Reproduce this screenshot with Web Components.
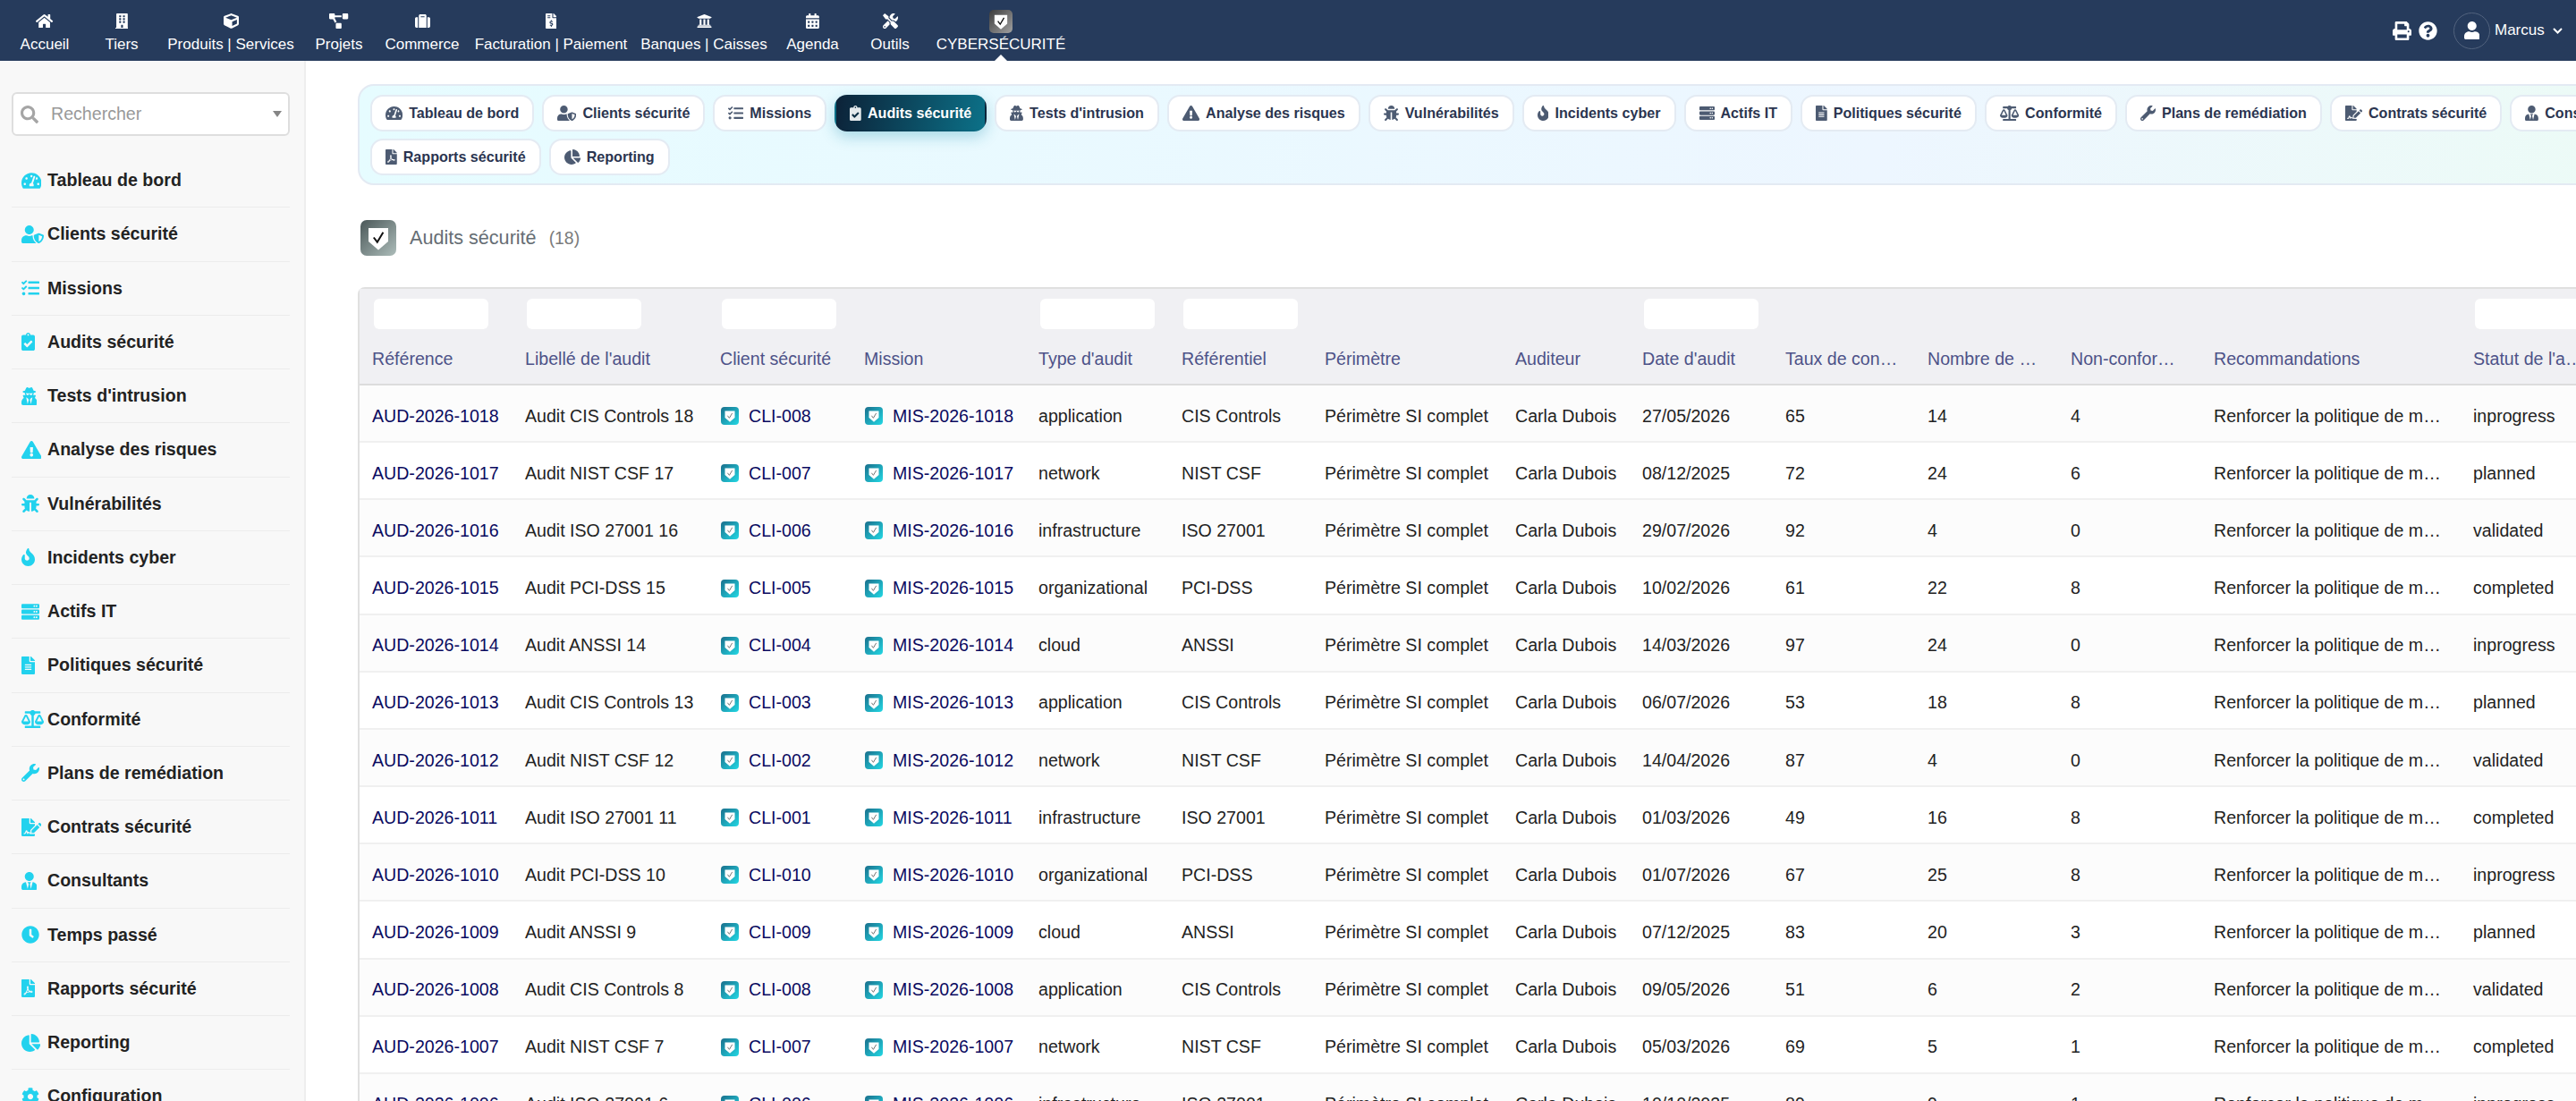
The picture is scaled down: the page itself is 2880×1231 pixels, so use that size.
<!DOCTYPE html>
<html lang="fr">
<head>
<meta charset="utf-8">
<title>Audits sécurité</title>
<style>
  html, body { margin: 0; height: 100%; overflow: hidden; background: #fff; }
  body { font-family: "Liberation Sans", Arial, sans-serif; }
</style>
</head>
<body>
<app-shell>
  <top-bar slot="top">
    <nav-item icon="home" w="86">Accueil</nav-item>
    <nav-item icon="building" w="86">Tiers</nav-item>
    <nav-item icon="cube" w="158">Produits | Services</nav-item>
    <nav-item icon="diagram" w="84">Projets</nav-item>
    <nav-item icon="suitcase" w="102">Commerce</nav-item>
    <nav-item icon="invoice" w="186">Facturation | Paiement</nav-item>
    <nav-item icon="landmark" w="156">Banques | Caisses</nav-item>
    <nav-item icon="calendar" w="87">Agenda</nav-item>
    <nav-item icon="tools" w="86">Outils</nav-item>
    <nav-item badge w="162" active>CYBERSÉCURITÉ</nav-item>
  </top-bar>
  <side-menu slot="side">
    <side-item icon="gauge">Tableau de bord</side-item>
    <side-item icon="usershield">Clients sécurité</side-item>
    <side-item icon="tasks">Missions</side-item>
    <side-item icon="clipboard">Audits sécurité</side-item>
    <side-item icon="spy">Tests d'intrusion</side-item>
    <side-item icon="warning">Analyse des risques</side-item>
    <side-item icon="bug">Vulnérabilités</side-item>
    <side-item icon="fire">Incidents cyber</side-item>
    <side-item icon="server">Actifs IT</side-item>
    <side-item icon="file">Politiques sécurité</side-item>
    <side-item icon="scale">Conformité</side-item>
    <side-item icon="wrench">Plans de remédiation</side-item>
    <side-item icon="signature">Contrats sécurité</side-item>
    <side-item icon="usertie">Consultants</side-item>
    <side-item icon="clock">Temps passé</side-item>
    <side-item icon="pdf">Rapports sécurité</side-item>
    <side-item icon="pie">Reporting</side-item>
    <side-item icon="cog">Configuration</side-item>
  </side-menu>
  <tab-panel>
    <tab-chip icon="gauge">Tableau de bord</tab-chip>
    <tab-chip icon="usershield">Clients sécurité</tab-chip>
    <tab-chip icon="tasks">Missions</tab-chip>
    <tab-chip icon="clipboard" active>Audits sécurité</tab-chip>
    <tab-chip icon="spy">Tests d'intrusion</tab-chip>
    <tab-chip icon="warning">Analyse des risques</tab-chip>
    <tab-chip icon="bug">Vulnérabilités</tab-chip>
    <tab-chip icon="fire">Incidents cyber</tab-chip>
    <tab-chip icon="server">Actifs IT</tab-chip>
    <tab-chip icon="file">Politiques sécurité</tab-chip>
    <tab-chip icon="scale">Conformité</tab-chip>
    <tab-chip icon="wrench">Plans de remédiation</tab-chip>
    <tab-chip icon="signature">Contrats sécurité</tab-chip>
    <tab-chip icon="usertie">Consultants</tab-chip>
    <tab-chip icon="clock">Temps passé</tab-chip>
    <tab-chip icon="pdf">Rapports sécurité</tab-chip>
    <tab-chip icon="pie">Reporting</tab-chip>
  </tab-panel>
  <page-title count="(18)">Audits sécurité</page-title>
  <audit-table></audit-table>
</app-shell>

<script>
const ICONS = {
  home: [576, "M280.37 148.26L96 300.11V464a16 16 0 0 0 16 16l112.06-.29a16 16 0 0 0 15.92-16V368a16 16 0 0 1 16-16h64a16 16 0 0 1 16 16v95.64a16 16 0 0 0 16 16.05L464 480a16 16 0 0 0 16-16V300L295.67 148.26a12.19 12.19 0 0 0-15.3 0zM571.6 251.47L488 182.56V44.05a12 12 0 0 0-12-12h-56a12 12 0 0 0-12 12v72.61L318.47 43a48 48 0 0 0-61 0L4.34 251.47a12 12 0 0 0-1.6 16.9l25.5 31A12 12 0 0 0 45.15 301l235.22-193.74a12.19 12.19 0 0 1 15.3 0L530.9 301a12 12 0 0 0 16.9-1.6l25.5-31a12 12 0 0 0-1.7-16.93z"],
  building: [448, "M436 480h-20V24c0-13.255-10.745-24-24-24H56C42.745 0 32 10.745 32 24v456H12c-6.627 0-12 5.373-12 12v20h448v-20c0-6.627-5.373-12-12-12zM128 76c0-6.627 5.373-12 12-12h40c6.627 0 12 5.373 12 12v40c0 6.627-5.373 12-12 12h-40c-6.627 0-12-5.373-12-12V76zm0 96c0-6.627 5.373-12 12-12h40c6.627 0 12 5.373 12 12v40c0 6.627-5.373 12-12 12h-40c-6.627 0-12-5.373-12-12v-40zm52 148h-40c-6.627 0-12-5.373-12-12v-40c0-6.627 5.373-12 12-12h40c6.627 0 12 5.373 12 12v40c0 6.627-5.373 12-12 12zm76 160h-64v-84c0-6.627 5.373-12 12-12h40c6.627 0 12 5.373 12 12v84zm64-172c0 6.627-5.373 12-12 12h-40c-6.627 0-12-5.373-12-12v-40c0-6.627 5.373-12 12-12h40c6.627 0 12 5.373 12 12v40zm0-96c0 6.627-5.373 12-12 12h-40c-6.627 0-12-5.373-12-12v-40c0-6.627 5.373-12 12-12h40c6.627 0 12 5.373 12 12v40zm0-96c0 6.627-5.373 12-12 12h-40c-6.627 0-12-5.373-12-12V76c0-6.627 5.373-12 12-12h40c6.627 0 12 5.373 12 12v40z"],
  cube: [512, "M239.1 6.3l-208 78c-18.7 7-31.1 25-31.1 45v225.1c0 18.2 10.3 34.8 26.5 42.9l208 104c13.5 6.8 29.4 6.8 42.9 0l208-104c16.3-8.1 26.5-24.8 26.5-42.9V129.3c0-20-12.4-37.9-31.1-44.9l-208-78C262 2.2 250 2.2 239.1 6.3zM256 68.4l192 72v1.1l-192 78-192-78v-1.1l192-72zm32 356V275.5l160-65v133.9l-160 80z"],
  diagram: [640, "M384 320H256c-17.67 0-32 14.33-32 32v128c0 17.67 14.33 32 32 32h128c17.67 0 32-14.33 32-32V352c0-17.67-14.33-32-32-32zM192 32c0-17.67-14.33-32-32-32H32C14.33 0 0 14.33 0 32v128c0 17.67 14.33 32 32 32h95.72l73.16 128.04C211.98 300.98 232.4 288 256 288h.28L192 175.51V128h224V64H192V32zM608 0H480c-17.67 0-32 14.33-32 32v128c0 17.67 14.33 32 32 32h128c17.67 0 32-14.33 32-32V32c0-17.67-14.33-32-32-32z"],
  suitcase: [512, "M128 480h256V80c0-26.5-21.5-48-48-48H176c-26.5 0-48 21.5-48 48v400zm64-384h128v32H192V96zm320 80v256c0 26.5-21.5 48-48 48h-48V128h48c26.5 0 48 21.5 48 48zM96 480H48c-26.5 0-48-21.5-48-48V176c0-26.5 21.5-48 48-48h48v352z"],
  invoice: [384, "M377 105L279.1 7c-4.5-4.5-10.6-7-17-7H256v128h128v-6.1c0-6.3-2.5-12.4-7-16.9zm-153 31V0H24C10.7 0 0 10.7 0 24v464c0 13.3 10.7 24 24 24h336c13.3 0 24-10.7 24-24V160H248c-13.2 0-24-10.8-24-24zM64 72c0-4.42 3.58-8 8-8h80c4.42 0 8 3.58 8 8v16c0 4.42-3.58 8-8 8H72c-4.42 0-8-3.58-8-8V72zm0 80v-16c0-4.42 3.58-8 8-8h80c4.42 0 8 3.58 8 8v16c0 4.42-3.58 8-8 8H72c-4.42 0-8-3.58-8-8zm144 263.88V440c0 4.42-3.58 8-8 8h-16c-4.42 0-8-3.58-8-8v-24.29c-11.29-.58-22.27-4.52-31.37-11.35-3.9-2.93-4.1-8.77-.57-12.14l11.75-11.21c2.77-2.64 6.89-2.76 10.13-.73 3.87 2.42 8.26 3.72 12.82 3.72h28.11c6.5 0 11.8-5.92 11.8-13.19 0-5.95-3.61-11.19-8.77-12.73l-45-13.5c-18.59-5.58-31.58-23.42-31.58-43.39 0-24.52 19.05-44.44 42.67-45.07V232c0-4.42 3.58-8 8-8h16c4.42 0 8 3.58 8 8v24.29c11.29.58 22.27 4.51 31.37 11.35 3.9 2.93 4.1 8.77.57 12.14l-11.75 11.21c-2.77 2.64-6.89 2.76-10.13.73-3.87-2.43-8.26-3.72-12.82-3.72h-28.11c-6.5 0-11.8 5.92-11.8 13.19 0 5.95 3.61 11.19 8.77 12.73l45 13.5c18.59 5.58 31.58 23.42 31.58 43.39 0 24.53-19.05 44.44-42.67 45.07z"],
  landmark: [512, "M496 128v16a8 8 0 0 1-8 8h-24v12c0 6.627-5.373 12-12 12H60c-6.627 0-12-5.373-12-12v-12H24a8 8 0 0 1-8-8v-16a8 8 0 0 1 4.941-7.392l232-88a7.996 7.996 0 0 1 6.118 0l232 88A8 8 0 0 1 496 128zm-24 304H40c-13.255 0-24 10.745-24 24v16a8 8 0 0 0 8 8h464a8 8 0 0 0 8-8v-16c0-13.255-10.745-24-24-24zM96 192v192H60c-6.627 0-12 5.373-12 12v20h416v-20c0-6.627-5.373-12-12-12h-36V192h-64v192h-64V192h-64v192h-64V192H96z"],
  calendar: [448, "M0 464c0 26.5 21.5 48 48 48h352c26.5 0 48-21.5 48-48V192H0v272zm320-196c0-6.6 5.4-12 12-12h40c6.6 0 12 5.4 12 12v40c0 6.6-5.4 12-12 12h-40c-6.6 0-12-5.4-12-12v-40zm0 128c0-6.6 5.4-12 12-12h40c6.6 0 12 5.4 12 12v40c0 6.6-5.4 12-12 12h-40c-6.6 0-12-5.4-12-12v-40zM192 268c0-6.6 5.4-12 12-12h40c6.6 0 12 5.4 12 12v40c0 6.6-5.4 12-12 12h-40c-6.6 0-12-5.4-12-12v-40zm0 128c0-6.6 5.4-12 12-12h40c6.6 0 12 5.4 12 12v40c0 6.6-5.4 12-12 12h-40c-6.6 0-12-5.4-12-12v-40zM64 268c0-6.6 5.4-12 12-12h40c6.6 0 12 5.4 12 12v40c0 6.6-5.4 12-12 12H76c-6.6 0-12-5.4-12-12v-40zm0 128c0-6.6 5.4-12 12-12h40c6.6 0 12 5.4 12 12v40c0 6.6-5.4 12-12 12H76c-6.6 0-12-5.4-12-12v-40zM400 64h-48V16c0-8.8-7.2-16-16-16h-32c-8.8 0-16 7.2-16 16v48H160V16c0-8.8-7.2-16-16-16h-32c-8.8 0-16 7.2-16 16v48H48C21.5 64 0 85.5 0 112v48h448v-48c0-26.5-21.5-48-48-48z"],
  tools: [512, "M501.1 395.7L384 278.6c-23.1-23.1-57.6-27.6-85.4-13.9L192 158.1V96L64 0 0 64l96 128h62.1l106.6 106.6c-13.6 27.8-9.2 62.3 13.9 85.4l117.1 117.1c14.6 14.6 38.2 14.6 52.7 0l52.7-52.7c14.5-14.6 14.5-38.2 0-52.7zM331.7 225c28.3 0 54.9 11 74.9 31l19.4 19.4c15.8-6.9 30.8-16.5 43.8-29.5 37.1-37.1 49.7-89.3 37.9-136.7-2.2-9-13.5-12.1-20.1-5.5l-74.4 74.4-67.9-11.3L334 98.9l74.4-74.4c6.6-6.6 3.4-17.9-5.7-20.2-47.4-11.7-99.6.9-136.6 37.9-28.5 28.5-41.9 66.1-41.2 103.6l82.1 82.1c8.1-1.9 16.5-2.9 24.7-2.9zm-103.9 82l-56.7-56.7L18.7 402.8c-25 25-25 65.5 0 90.5s65.5 25 90.5 0l123.6-123.6c-7.6-19.9-9.9-41.6-5-62.7zM64 472c-13.2 0-24-10.8-24-24 0-13.3 10.7-24 24-24s24 10.7 24 24c0 13.2-10.7 24-24 24z"],
  print: [512, "M448 192V77.25c0-8.49-3.37-16.62-9.37-22.63L393.37 9.37c-6-6-14.14-9.37-22.63-9.37H96C78.33 0 64 14.33 64 32v160c-35.35 0-64 28.65-64 64v112c0 8.84 7.16 16 16 16h48v96c0 17.67 14.33 32 32 32h320c17.67 0 32-14.33 32-32v-96h48c8.84 0 16-7.16 16-16V256c0-35.35-28.65-64-64-64zm-64 256H128v-96h256v96zm0-224H128V64h192v48c0 8.84 7.16 16 16 16h48v96zm48 72c-13.25 0-24-10.75-24-24 0-13.26 10.75-24 24-24s24 10.74 24 24c0 13.25-10.75 24-24 24z"],
  help: [512, "M504 256c0 136.997-111.043 248-248 248S8 392.997 8 256C8 119.083 119.043 8 256 8s248 111.083 248 248zM262.655 90c-54.497 0-89.255 22.957-116.549 63.758-3.536 5.286-2.353 12.415 2.715 16.258l34.699 26.31c5.205 3.947 12.621 3.008 16.665-2.122 17.864-22.658 30.113-35.797 57.303-35.797 20.429 0 45.698 13.148 45.698 32.958 0 14.976-12.363 22.667-32.534 33.976C247.128 238.528 216 254.941 216 296v4c0 6.627 5.373 12 12 12h56c6.627 0 12-5.373 12-12v-1.333c0-28.462 83.186-29.647 83.186-106.667 0-58.002-60.165-102-116.531-102zM256 338c-25.365 0-46 20.635-46 46 0 25.364 20.635 46 46 46s46-20.636 46-46c0-25.365-20.635-46-46-46z"],
  user: [448, "M224 256c70.7 0 128-57.3 128-128S294.7 0 224 0 96 57.3 96 128s57.3 128 128 128zm89.6 32h-16.7c-22.2 10.2-46.9 16-72.9 16s-50.6-5.8-72.9-16h-16.7C60.2 288 0 348.2 0 422.4V464c0 26.5 21.5 48 48 48h352c26.5 0 48-21.5 48-48v-41.6c0-74.2-60.2-134.4-134.4-134.4z"],
  gauge: [576, "M288 32C128.94 32 0 160.94 0 320c0 52.8 14.25 102.26 39.06 144.8 5.61 9.62 16.3 15.2 27.44 15.2h443c11.14 0 21.83-5.58 27.44-15.2C561.75 422.26 576 372.8 576 320c0-159.06-128.94-288-288-288zm0 64c14.71 0 26.58 10.13 30.32 23.65-1.11 2.26-2.64 4.23-3.45 6.67l-9.22 27.67c-5.13 3.49-10.97 6.01-17.64 6.01-17.67 0-32-14.33-32-32S270.33 96 288 96zM96 384c-17.67 0-32-14.33-32-32s14.33-32 32-32 32 14.33 32 32-14.33 32-32 32zm48-160c-17.67 0-32-14.33-32-32s14.33-32 32-32 32 14.33 32 32-14.33 32-32 32zm246.77-72.41l-61.33 184C343.13 347.33 352 364.54 352 384c0 11.72-3.38 22.55-8.88 32H232.88c-5.5-9.45-8.88-20.28-8.88-32 0-33.94 26.5-61.43 59.9-63.59l61.34-184.01c4.17-12.56 17.73-19.45 30.36-15.17 12.57 4.19 19.35 17.79 15.17 30.36zm14.66 57.2l15.52-46.55c3.47-1.29 7.13-2.23 11.05-2.23 17.67 0 32 14.33 32 32s-14.33 32-32 32c-11.38-.01-20.89-6.28-26.57-15.22zM480 384c-17.67 0-32-14.33-32-32s14.33-32 32-32 32 14.33 32 32-14.33 32-32 32z"],
  usershield: [640, "M622.3 271.1l-115.2-45c-4.1-1.6-12.6-3.7-22.2 0l-115.2 45c-10.7 4.2-17.7 14-17.7 24.9 0 111.6 68.7 188.8 132.9 213.9 9.6 3.7 18 1.6 22.2 0C558.4 489.9 640 420.5 640 296c0-10.9-7-20.7-17.7-24.9zM496 462.4V273.3l95.5 37.3c-5.6 87.1-60.9 135.4-95.5 151.8zM224 256c70.7 0 128-57.3 128-128S294.7 0 224 0 96 57.3 96 128s57.3 128 128 128zm96 40c0-2.5.8-4.8 1.1-7.2-2.5-.1-4.9-.8-7.5-.8h-16.7c-22.2 10.2-46.9 16-72.9 16s-50.6-5.8-72.9-16h-16.7C60.2 288 0 348.2 0 422.4V464c0 26.5 21.5 48 48 48h352c6.8 0 13.3-1.5 19.2-4-54-42.9-99.2-116.7-99.2-212z"],
  tasks: [512, "M139.61 35.5a12 12 0 0 0-17 0L58.93 98.81l-22.7-22.12a12 12 0 0 0-17 0L3.53 92.41a12 12 0 0 0 0 17l47.59 47.4a12.78 12.78 0 0 0 17.61 0l15.59-15.62L156.52 69a12.09 12.09 0 0 0 .09-17zm0 159.19a12 12 0 0 0-17 0l-63.68 63.72-22.7-22.1a12 12 0 0 0-17 0L3.53 252a12 12 0 0 0 0 17L51 316.5a12.77 12.77 0 0 0 17.6 0l15.7-15.69 72.2-72.22a12 12 0 0 0 .09-16.9zM64 368c-26.49 0-48.59 21.5-48.59 48S37.53 464 64 464a48 48 0 0 0 0-96zm432 16H208a16 16 0 0 0-16 16v32a16 16 0 0 0 16 16h288a16 16 0 0 0 16-16v-32a16 16 0 0 0-16-16zm0-320H208a16 16 0 0 0-16 16v32a16 16 0 0 0 16 16h288a16 16 0 0 0 16-16V80a16 16 0 0 0-16-16zm0 160H208a16 16 0 0 0-16 16v32a16 16 0 0 0 16 16h288a16 16 0 0 0 16-16v-32a16 16 0 0 0-16-16z"],
  clipboard: [384, "M336 64h-80c0-35.3-28.7-64-64-64s-64 28.7-64 64H48C21.5 64 0 85.5 0 112v352c0 26.5 21.5 48 48 48h288c26.5 0 48-21.5 48-48V112c0-26.5-21.5-48-48-48zM192 40c13.3 0 24 10.7 24 24s-10.7 24-24 24-24-10.7-24-24 10.7-24 24-24zm121.2 231.8l-143 141.8c-4.7 4.7-12.3 4.6-17-.1l-82.6-83.3c-4.7-4.7-4.6-12.3.1-17L99.1 285c4.7-4.7 12.3-4.6 17 .1l46 46.4 106-105.2c4.7-4.7 12.3-4.6 17 .1l28.2 28.4c4.7 4.8 4.6 12.3-.1 17z"],
  spy: [448, "M383.9 308.3l23.9-62.6c4-10.5-3.7-21.7-15-21.7h-58.5c11-18.9 17.8-40.6 17.8-64v-.3c39.2-7.8 64-19.1 64-31.7 0-13.3-27.3-25.1-70.1-33-9.2-32.8-27-65.8-40.6-82.8-9.5-11.9-25.9-15.6-39.5-8.8l-27.6 13.8c-9 4.5-19.6 4.5-28.6 0L182.1 3.4c-13.6-6.8-30-3.1-39.5 8.8-13.5 17-31.4 50-40.6 82.8-42.7 7.9-70 19.7-70 33 0 12.6 24.8 23.9 64 31.7v.3c0 23.4 6.8 45.1 17.8 64H56.3c-11.5 0-19.2 11.7-14.7 22.3l25.8 60.2C27.3 329.8 0 372.7 0 422.4v44.8C0 491.9 20.1 512 44.8 512h358.4c24.7 0 44.8-20.1 44.8-44.8v-44.8c0-48.4-25.8-90.4-64.1-114.1zM176 480l-41.6-192 49.6 32 24 40-32 120zm96 0l-32-120 24-40 49.6-32L272 480zm41.7-298.5c-3.9 11.9-7 24.6-16.5 33.4-10.1 9.3-48 22.4-64-25-2.8-8.4-15.4-8.4-18.3 0-17 50.2-56 32.4-64 25-9.5-8.8-12.7-21.5-16.5-33.4-.8-2.5-6.3-5.7-6.3-5.8v-10.8c28.3 3.6 61 5.8 96 5.8s67.7-2.1 96-5.8v10.8c-.1.1-5.6 3.2-6.4 5.8z"],
  warning: [576, "M569.517 440.013C587.975 472.007 564.806 512 527.94 512H48.054c-36.937 0-59.999-40.055-41.577-71.987L246.423 23.985c18.467-32.009 64.72-31.951 83.154 0l239.94 416.028zM288 354c-25.405 0-46 20.595-46 46s20.595 46 46 46 46-20.595 46-46-20.595-46-46-46zm-43.673-165.346l7.418 136c.347 6.364 5.609 11.346 11.982 11.346h48.546c6.373 0 11.635-4.982 11.982-11.346l7.418-136c.375-6.874-5.098-12.654-11.982-12.654h-63.383c-6.884 0-12.356 5.78-11.981 12.654z"],
  bug: [512, "M511.988 288.9c-.478 17.43-15.217 31.1-32.653 31.1H424v16c0 21.864-4.882 42.584-13.6 61.145l60.228 60.228c12.496 12.497 12.496 32.758 0 45.255-12.498 12.497-32.759 12.496-45.256 0l-54.736-54.736C345.886 467.965 314.351 480 280 480V236c0-6.627-5.373-12-12-12h-24c-6.627 0-12 5.373-12 12v244c-34.351 0-65.886-12.035-90.636-32.108l-54.736 54.736c-12.498 12.497-32.759 12.496-45.256 0-12.496-12.497-12.496-32.758 0-45.255l60.228-60.228C92.882 378.584 88 357.864 88 336v-16H32.666C15.23 320 .491 306.33.013 288.9-.484 270.816 14.028 256 32 256h56v-58.745l-46.628-46.628c-12.496-12.497-12.496-32.758 0-45.255 12.498-12.497 32.758-12.497 45.256 0L141.255 160h229.489l54.627-54.627c12.498-12.497 32.758-12.497 45.256 0 12.496 12.497 12.496 32.758 0 45.255L424 197.255V256h56c17.972 0 32.484 14.816 31.988 32.9zM257 0c-61.856 0-112 50.144-112 112h224C369 50.144 318.856 0 257 0z"],
  fire: [384, "M216 23.86c0-23.8-30.65-32.77-44.15-13.04C48 191.85 224 200 224 288c0 35.63-29.11 64.46-64.85 63.99-35.17-.45-63.15-29.77-63.15-64.94v-85.51c0-21.7-26.47-32.23-41.43-16.5C27.8 213.16 0 261.33 0 320c0 105.87 86.13 192 192 192s192-86.13 192-192c0-170.29-168-193-168-296.14z"],
  server: [512, "M480 160H32c-17.673 0-32-14.327-32-32V64c0-17.673 14.327-32 32-32h448c17.673 0 32 14.327 32 32v64c0 17.673-14.327 32-32 32zm-48-88c-13.255 0-24 10.745-24 24s10.745 24 24 24 24-10.745 24-24-10.745-24-24-24zm-64 0c-13.255 0-24 10.745-24 24s10.745 24 24 24 24-10.745 24-24-10.745-24-24-24zm112 248H32c-17.673 0-32-14.327-32-32v-64c0-17.673 14.327-32 32-32h448c17.673 0 32 14.327 32 32v64c0 17.673-14.327 32-32 32zm-48-88c-13.255 0-24 10.745-24 24s10.745 24 24 24 24-10.745 24-24-10.745-24-24-24zm-64 0c-13.255 0-24 10.745-24 24s10.745 24 24 24 24-10.745 24-24-10.745-24-24-24zm112 248H32c-17.673 0-32-14.327-32-32v-64c0-17.673 14.327-32 32-32h448c17.673 0 32 14.327 32 32v64c0 17.673-14.327 32-32 32zm-48-88c-13.255 0-24 10.745-24 24s10.745 24 24 24 24-10.745 24-24-10.745-24-24-24zm-64 0c-13.255 0-24 10.745-24 24s10.745 24 24 24 24-10.745 24-24-10.745-24-24-24z"],
  file: [384, "M224 136V0H24C10.7 0 0 10.7 0 24v464c0 13.3 10.7 24 24 24h336c13.3 0 24-10.7 24-24V160H248c-13.2 0-24-10.8-24-24zm64 236c0 6.6-5.4 12-12 12H108c-6.6 0-12-5.4-12-12v-8c0-6.6 5.4-12 12-12h168c6.6 0 12 5.4 12 12v8zm0-64c0 6.6-5.4 12-12 12H108c-6.6 0-12-5.4-12-12v-8c0-6.6 5.4-12 12-12h168c6.6 0 12 5.4 12 12v8zm0-72v8c0 6.6-5.4 12-12 12H108c-6.6 0-12-5.4-12-12v-8c0-6.6 5.4-12 12-12h168c6.6 0 12 5.4 12 12zm96-114.1v6.1H256V0h6.1c6.4 0 12.5 2.5 17 7l97.9 98c4.5 4.5 7 10.6 7 16.9z"],
  scale: [640, "M256 336h-.02c0-16.18 1.34-8.73-85.05-181.51-17.65-35.29-68.19-35.36-85.87 0C-2.06 328.75.02 320.33.02 336H0c0 44.18 57.31 80 128 80s128-35.82 128-80zM128 176l72 144H56l72-144zm511.98 160c0-16.18 1.34-8.73-85.05-181.51-17.65-35.29-68.19-35.36-85.87 0-87.12 174.26-85.04 165.84-85.04 181.51H384c0 44.18 57.31 80 128 80s128-35.82 128-80h-.02zM440 320l72-144 72 144H440zm88 128H352V153.25c23.51-10.29 41.16-31.48 46.39-57.25H528c8.84 0 16-7.16 16-16V48c0-8.84-7.16-16-16-16H383.64C369.04 12.68 346.09 0 320 0s-49.04 12.68-63.64 32H112c-8.84 0-16 7.16-16 16v32c0 8.84 7.16 16 16 16h129.61c5.23 25.76 22.87 46.96 46.39 57.25V448H112c-8.84 0-16 7.16-16 16v32c0 8.84 7.16 16 16 16h416c8.84 0 16-7.16 16-16v-32c0-8.84-7.16-16-16-16z"],
  wrench: [512, "M507.73 109.1c-2.24-9.03-13.54-12.09-20.12-5.51l-74.36 74.36-67.88-11.31-11.31-67.88 74.36-74.36c6.62-6.62 3.43-17.9-5.66-20.16-47.38-11.74-99.55.91-136.58 37.93-39.64 39.64-50.55 97.1-34.05 147.2L18.74 402.76c-24.99 24.99-24.99 65.51 0 90.5 24.99 24.99 65.51 24.99 90.5 0l213.21-213.21c50.12 16.71 107.47 5.68 147.37-34.22 37.07-37.07 49.7-89.32 37.91-136.73zM64 472c-13.25 0-24-10.75-24-24 0-13.26 10.75-24 24-24s24 10.74 24 24c0 13.25-10.75 24-24 24z"],
  signature: [576, "M218.17 424.14c-2.95-5.92-8.09-6.52-10.17-6.52s-7.22.59-10.02 6.19l-7.67 15.34c-6.37 12.78-25.03 11.37-29.48-2.09L144 386.59l-10.61 31.88c-5.89 17.66-22.38 29.53-41 29.53H80c-8.84 0-16-7.16-16-16s7.16-16 16-16h12.39c4.83 0 9.11-3.08 10.64-7.66l18.19-54.64c3.3-9.81 12.44-16.41 22.78-16.41s19.48 6.59 22.77 16.41l13.88 41.64c19.75-16.19 54.06-9.7 66 14.16 1.89 3.78 5.49 5.95 9.36 6.26v-82.12l128-127.09V160H248c-13.2 0-24-10.8-24-24V0H24C10.7 0 0 10.7 0 24v464c0 13.3 10.7 24 24 24h336c13.3 0 24-10.7 24-24v-40l-128-.11c-16.12-.31-30.58-9.28-37.83-23.75zM384 121.9c0-6.3-2.5-12.4-7-16.9L279.1 7c-4.5-4.5-10.6-7-17-7H256v128h128v-6.1zm-96 225.06V416h68.99l161.68-162.78-67.88-67.88L288 346.96zm280.54-179.63l-31.87-31.87c-9.94-9.94-26.07-9.94-36.01 0l-27.25 27.25 67.88 67.88 27.25-27.25c9.95-9.94 9.95-26.07 0-36.01z"],
  usertie: [448, "M224 256c70.7 0 128-57.3 128-128S294.7 0 224 0 96 57.3 96 128s57.3 128 128 128zm95.8 32.6L272 480l-32-136 32-56h-96l32 56-32 136-47.8-191.4C56.9 292 0 350.3 0 422.4V464c0 26.5 21.5 48 48 48h352c26.5 0 48-21.5 48-48v-41.6c0-72.1-56.9-130.4-128.2-133.8z"],
  clock: [512, "M256,8C119,8,8,119,8,256S119,504,256,504,504,393,504,256,393,8,256,8Zm92.49,313h0l-20,25a16,16,0,0,1-22.49,2.5h0l-67-49.72a40,40,0,0,1-15-31.23V112a16,16,0,0,1,16-16h32a16,16,0,0,1,16,16V256l58,42.5A16,16,0,0,1,348.49,321Z"],
  pdf: [384, "M181.9 256.1c-5-16-4.9-46.9-2-46.9 8.4 0 7.6 36.9 2 46.9zm-1.7 47.2c-7.7 20.2-17.3 43.3-28.4 62.7 18.3-7 39-17.2 62.9-21.9-12.7-9.6-24.9-23.4-34.5-40.8zM86.1 428.1c0 .8 13.2-5.4 34.9-40.2-6.7 6.3-29.1 24.5-34.9 40.2zM248 160h136v328c0 13.3-10.7 24-24 24H24c-13.3 0-24-10.7-24-24V24C0 10.7 10.7 0 24 0h200v136c0 13.2 10.8 24 24 24zm-8 171.8c-20-12.2-33.3-29-42.7-53.8 4.5-18.5 11.6-46.6 6.2-64.2-4.7-29.4-42.4-26.5-47.8-6.8-5 18.3-.4 44.1 8.1 77-11.6 27.6-28.7 64.6-40.8 85.8-.1 0-.1.1-.2.1-27.1 13.9-73.6 44.5-54.5 68 5.6 6.9 16 10 21.5 10 17.9 0 35.7-18 61.1-61.8 25.8-8.5 54.1-19.1 79-23.2 21.7 11.8 47.1 19.5 64 19.5 29.2 0 31.2-32 19.7-43.4-13.9-13.6-54.3-9.7-73.6-7.2zM377 105L279 7c-4.5-4.5-10.6-7-17-7h-6v128h128v-6.1c0-6.3-2.5-12.4-7-16.9zm-74.1 255.3c4.1-2.7-2.5-11.9-42.8-9 37.1 15.8 42.8 9 42.8 9z"],
  pie: [544, "M527.79 288H290.5l158.03 158.03c6.04 6.04 15.98 6.53 22.19.68 38.7-36.46 65.32-85.61 73.13-140.86 1.34-9.46-6.51-17.85-16.06-17.85zm-15.83-64.8C503.72 103.74 408.26 8.28 288.8.04 279.68-.59 272 7.1 272 16.24V240h223.77c9.14 0 16.82-7.68 16.19-16.8zM224 288V50.71c0-9.55-8.39-17.4-17.84-16.06C86.99 51.49-4.1 155.6.14 280.37 4.5 408.51 114.83 513.59 243.03 511.98c50.4-.63 96.97-16.87 135.26-44.03 7.9-5.6 8.42-17.23 1.57-24.08L224 288z"],
  cog: [512, "M487.4 315.7l-42.6-24.6c4.3-23.2 4.3-47 0-70.2l42.6-24.6c4.9-2.8 7.1-8.6 5.5-14-11.1-35.6-30-67.8-54.7-94.6-3.8-4.1-10-5.1-14.8-2.3L380.8 110c-17.9-15.4-38.5-27.3-60.8-35.1V25.8c0-5.6-3.9-10.5-9.4-11.7-36.7-8.2-74.3-7.8-109.2 0-5.5 1.2-9.4 6.1-9.4 11.7V75c-22.2 7.9-42.8 19.8-60.8 35.1L88.7 85.5c-4.9-2.8-11-1.9-14.8 2.3-24.7 26.7-43.6 58.9-54.7 94.6-1.7 5.4.6 11.2 5.5 14L67.3 221c-4.3 23.2-4.3 47 0 70.2l-42.6 24.6c-4.9 2.8-7.1 8.6-5.5 14 11.1 35.6 30 67.8 54.7 94.6 3.8 4.1 10 5.1 14.8 2.3l42.6-24.6c17.9 15.4 38.5 27.3 60.8 35.1v49.2c0 5.6 3.9 10.5 9.4 11.7 36.7 8.2 74.3 7.8 109.2 0 5.5-1.2 9.4-6.1 9.4-11.7v-49.2c22.2-7.9 42.8-19.8 60.8-35.1l42.6 24.6c4.9 2.8 11 1.9 14.8-2.3 24.7-26.7 43.6-58.9 54.7-94.6 1.5-5.5-.7-11.3-5.6-14.1zM256 336c-44.1 0-80-35.9-80-80s35.9-80 80-80 80 35.9 80 80-35.9 80-80 80z"],
  search: [512, "M505 442.7L405.3 343c-4.5-4.5-10.6-7-17-7H372c27.6-35.3 44-79.7 44-128C416 93.1 322.9 0 208 0S0 93.1 0 208s93.1 208 208 208c48.3 0 92.7-16.4 128-44v16.3c0 6.4 2.5 12.5 7 17l99.7 99.7c9.4 9.4 24.6 9.4 33.9 0l28.3-28.3c9.4-9.4 9.4-24.6.1-34zM208 336c-70.7 0-128-57.2-128-128 0-70.7 57.2-128 128-128 70.7 0 128 57.2 128 128 0 70.7-57.2 128-128 128z"]
};

// draws one solid icon, height taken from the size attribute
function iconSvg(name, size) {
  const [w, d] = ICONS[name];
  return `<svg width="${(w / 512) * size}" height="${size}" viewBox="0 0 ${w} 512" fill="currentColor" style="display:block;flex:none"><path d="${d}"/></svg>`;
}

// the shield-and-check logo: used in the menu bar, the title and the table links
function shieldBadge(size, radius, bg, check, shield) {
  return `<span style="display:block;flex:none;width:${size}px;height:${size}px;border-radius:${radius}px;background:${bg}">
    <svg width="${size}" height="${size}" viewBox="0 0 40 40" style="display:block">
      <path d="M9 9h22v15L20 33.5 9 24z" fill="${shield}"/>
      <path d="M14.8 19.5l4 5.2 6.6-11" fill="none" stroke="${check}" stroke-width="2"/>
    </svg></span>`;
}

class AppShell extends HTMLElement {
  constructor() {
    super();
    this.attachShadow({ mode: "open" });
    this.shadowRoot.innerHTML = `
      <style>
        :host { display: block; height: 100vh; overflow: hidden; }
        .body { display: flex; height: calc(100vh - 68px); overflow: hidden; }
        main { flex: 1; min-width: 0; padding: 26px 0 0 58px; overflow: hidden; }
      </style>
      <slot name="top"></slot>
      <div class="body">
        <slot name="side"></slot>
        <main><slot></slot></main>
      </div>
    `;
  }
}

class TopBar extends HTMLElement {
  constructor() {
    super();
    this.attachShadow({ mode: "open" });
    this.shadowRoot.innerHTML = `
      <style>
        :host { display: flex; height: 68px; background: #263b5c; color: #fff; padding-left: 7px; font-size: 17px; align-items: stretch; }
        .right { margin-left: auto; display: flex; align-items: center; padding-right: 15px; }
        .avatar { width: 41px; height: 41px; box-sizing: border-box; border: 1px solid #52637e; border-radius: 50%; display: flex; align-items: center; justify-content: center; margin-left: 18px; margin-right: 5px; }
        .name { width: 65px; }
        .help { margin-left: 8px; }
      </style>
      <slot></slot>
      <div class="right">
        ${iconSvg("print", 21)}
        <span class="help">${iconSvg("help", 21)}</span>
        <span class="avatar">${iconSvg("user", 20)}</span>
        <span class="name">Marcus</span>
        <svg width="11" height="7" viewBox="0 0 11 7" fill="none" stroke="#fff" stroke-width="2"><path d="M1 1l4.5 4.5L10 1"/></svg>
      </div>
    `;
  }
}

class NavItem extends HTMLElement {
  constructor() {
    super();
    this.attachShadow({ mode: "open" });
  }
  connectedCallback() {
    const pic = this.hasAttribute("badge")
      ? shieldBadge(26, 5, "linear-gradient(135deg,#3c3c3c,#a2a2a2)", "#111", "#fff")
      : iconSvg(this.getAttribute("icon"), 17);
    this.shadowRoot.innerHTML = `
      <style>
        :host { display: flex; position: relative; flex-direction: column; align-items: center; flex: none; white-space: nowrap; color: #fff; width: ${this.getAttribute("w")}px; }
        .pic { height: 40px; display: flex; align-items: center; box-sizing: border-box; padding-top: 7px; }
        .caret { position: absolute; left: 50%; bottom: 0; margin-left: -7px; border: 7px solid transparent; border-top: 0; border-bottom-color: #fff; }
      </style>
      <div class="pic">${pic}</div>
      <slot></slot>
      ${this.hasAttribute("active") ? '<span class="caret"></span>' : ""}
    `;
  }
}

class SideMenu extends HTMLElement {
  constructor() {
    super();
    this.attachShadow({ mode: "open" });
    this.shadowRoot.innerHTML = `
      <style>
        :host { display: block; flex: none; width: 340px; box-sizing: content-box; background: #f8f8f8; border-right: 2px solid #eeeeee; padding-top: 35px; overflow: hidden; }
        .search { display: flex; align-items: center; box-sizing: border-box; width: 311px; height: 49px; margin: 0 0 20px 13px; background: #fff; border: 2px solid #dedede; border-radius: 6px; color: #a5a5a5; padding: 0 7px 0 8px; }
        .search span { margin-left: 14px; flex: 1; font-size: 19.6px; color: #999; }
        .tri { width: 0; border: 5.5px solid transparent; border-top: 7px solid #858585; border-bottom: 0; }
      </style>
      <div class="search">
        ${iconSvg("search", 20)}
        <span>Rechercher</span>
        <i class="tri"></i>
      </div>
      <slot></slot>
    `;
  }
}

class SideItem extends HTMLElement {
  constructor() {
    super();
    this.attachShadow({ mode: "open" });
  }
  connectedCallback() {
    this.shadowRoot.innerHTML = `
      <style>
        :host { display: flex; align-items: center; box-sizing: border-box; height: 60.25px; margin: 0 16px 0 13px; padding-left: 10.5px; border-bottom: 1.5px solid #ececec; font-size: 19.6px; font-weight: 700; color: #222; white-space: nowrap; }
        .ic { width: 29.5px; flex: none; color: #22d2ee; }
      </style>
      <span class="ic">${iconSvg(this.getAttribute("icon"), 20)}</span>
      <slot></slot>
    `;
  }
}

class TabPanel extends HTMLElement {
  constructor() {
    super();
    this.attachShadow({ mode: "open" });
    this.shadowRoot.innerHTML = `
      <style>
        :host { display: flex; flex-wrap: wrap; gap: 8px 9px; box-sizing: border-box; width: 2830px; height: 113px; padding: 10px 12px; border: 2px solid #e3eaf3; border-radius: 18px; background: linear-gradient(100deg, #e6fcff 0%, #edf6ff 60%, #ecfbf6 90%, #ecfbf6 100%); align-content: flex-start; }
      </style>
      <slot></slot>
    `;
  }
}

class TabChip extends HTMLElement {
  constructor() {
    super();
    this.attachShadow({ mode: "open" });
  }
  connectedCallback() {
    this.shadowRoot.innerHTML = `
      <style>
        :host { display: flex; align-items: center; gap: 7px; height: 41px; box-sizing: border-box; padding: 0 15px; background: #fff; border: 2px solid #e4ebf3; border-radius: 14px; color: #4d5b72; font-size: 16.1px; font-weight: 700; white-space: nowrap; }
        :host([active]) { background: linear-gradient(100deg, #0c2238, #0c7188); border-color: transparent; color: #e4e9ec; box-shadow: 0 6px 16px rgba(20,140,170,.3); }
        span { color: #2b3550; }
        :host([active]) span { color: #fff; }
      </style>
      ${iconSvg(this.getAttribute("icon"), 17)}
      <span><slot></slot></span>
    `;
  }
}

class PageTitle extends HTMLElement {
  constructor() {
    super();
    this.attachShadow({ mode: "open" });
  }
  connectedCallback() {
    this.shadowRoot.innerHTML = `
      <style>
        :host { display: flex; align-items: center; height: 40px; margin: 39px 0 35px 3px; color: #666e74; font-size: 21.6px; }
        .t { margin-left: 15px; }
        .n { margin-left: 14px; font-size: 19.4px; color: #7b7b7b; }
      </style>
      ${shieldBadge(40, 7, "linear-gradient(135deg,#4a5758,#adbdba)", "#111", "#fff")}
      <span class="t"><slot></slot></span>
      <span class="n">${this.getAttribute("count")}</span>
    `;
  }
}

const TYPES = ["application", "network", "infrastructure", "organizational", "cloud"];
const FRAMES = ["CIS Controls", "NIST CSF", "ISO 27001", "PCI-DSS", "ANSSI"];
const STATES = ["inprogress", "planned", "validated", "completed"];
// no, date, rate, findings, non-conformities
const ROWS = [
  [1018, "27/05/2026", 65, 14, 4], [1017, "08/12/2025", 72, 24, 6], [1016, "29/07/2026", 92, 4, 0],
  [1015, "10/02/2026", 61, 22, 8], [1014, "14/03/2026", 97, 24, 0], [1013, "06/07/2026", 53, 18, 8],
  [1012, "14/04/2026", 87, 4, 0], [1011, "01/03/2026", 49, 16, 8], [1010, "01/07/2026", 67, 25, 8],
  [1009, "07/12/2025", 83, 20, 3], [1008, "09/05/2026", 51, 6, 2], [1007, "05/03/2026", 69, 5, 1],
  [1006, "10/10/2025", 89, 9, 1]
];
const HEADS = ["Référence", "Libellé de l'audit", "Client sécurité", "Mission", "Type d'audit", "Référentiel", "Périmètre", "Auditeur", "Date d'audit", "Taux de conformité", "Nombre de constats", "Non-conformités", "Recommandations", "Statut de l'audit"];
const FILTERS = [0, 1, 2, 4, 5, 8, 13];

class AuditTable extends HTMLElement {
  constructor() {
    super();
    this.attachShadow({ mode: "open" });
    const badge = shieldBadge(20, 4, "linear-gradient(135deg,#1a6f8c,#22d8e4)", "#777", "#fff");
    const filters = HEADS.map((h, i) => `<div class="c">${FILTERS.includes(i) ? "<i></i>" : ""}</div>`).join("");
    const heads = HEADS.map((h) => `<div class="c">${h}</div>`).join("");
    const rows = ROWS.map(([no, date, rate, found, nc], i) => {
      const cli = "CLI-" + String(i === 10 ? 8 : i === 11 ? 7 : i === 12 ? 6 : 8 - i < 1 ? 18 - i : 8 - i).padStart(3, "0");
      const cells = [
        `<a>AUD-2026-${no}</a>`,
        `Audit ${FRAMES[i % 5]} ${18 - i}`,
        `<span class="ref">${badge}<a>${cli}</a></span>`,
        `<span class="ref">${badge}<a>MIS-2026-${no}</a></span>`,
        TYPES[i % 5], FRAMES[i % 5], "Périmètre SI complet", "Carla Dubois", date, rate, found, nc,
        "Renforcer la politique de mots de passe", STATES[i % 4]
      ];
      return `<div class="r">${cells.map((v) => `<div class="c">${v}</div>`).join("")}</div>`;
    }).join("");
    this.shadowRoot.innerHTML = `
      <style>
        :host { display: block; width: 2680px; box-sizing: border-box; border: 2px solid #e0e0e0; border-bottom: 0; border-radius: 8px 8px 0 0; font-size: 19.6px; color: #222; --cols: 171px 218px 161px 195px 160px 160px 213px 142px 160px 159px 160px 160px 290px 160px; }
        .r { display: grid; grid-template-columns: var(--cols); height: 64.17px; box-sizing: border-box; padding-top: 6px; align-items: center; border-bottom: 2px solid #f0f0f0; background: #fff; }
        .r:nth-child(odd) { background: #fcfcfc; }
        .c { padding-left: 14px; min-width: 0; white-space: nowrap; }
        .c:nth-child(n+10) { overflow: hidden; text-overflow: ellipsis; padding-right: 18px; }
        .fr { display: grid; grid-template-columns: var(--cols); height: 46px; background: #f0f0f3; padding-top: 11px; box-sizing: content-box; }
        .fr i { display: block; width: 128px; height: 34px; margin-left: 2px; background: #fff; border-radius: 6px; }
        .hr { display: grid; grid-template-columns: var(--cols); height: 51px; box-sizing: border-box; padding-top: 10px; align-items: start; background: #f0f0f3; color: #4d5288; border-bottom: 2px solid #dcdcdc; }
        a { color: #0a0a5f; }
        .ref { display: flex; align-items: center; gap: 11.5px; margin-left: .5px; }
      </style>
      <div class="fr">${filters}</div>
      <div class="hr">${heads}</div>
      <div>${rows}</div>
    `;
  }
}

customElements.define("app-shell", AppShell);
customElements.define("top-bar", TopBar);
customElements.define("nav-item", NavItem);
customElements.define("side-menu", SideMenu);
customElements.define("side-item", SideItem);
customElements.define("tab-panel", TabPanel);
customElements.define("tab-chip", TabChip);
customElements.define("page-title", PageTitle);
customElements.define("audit-table", AuditTable);
</script>
</body>
</html>
